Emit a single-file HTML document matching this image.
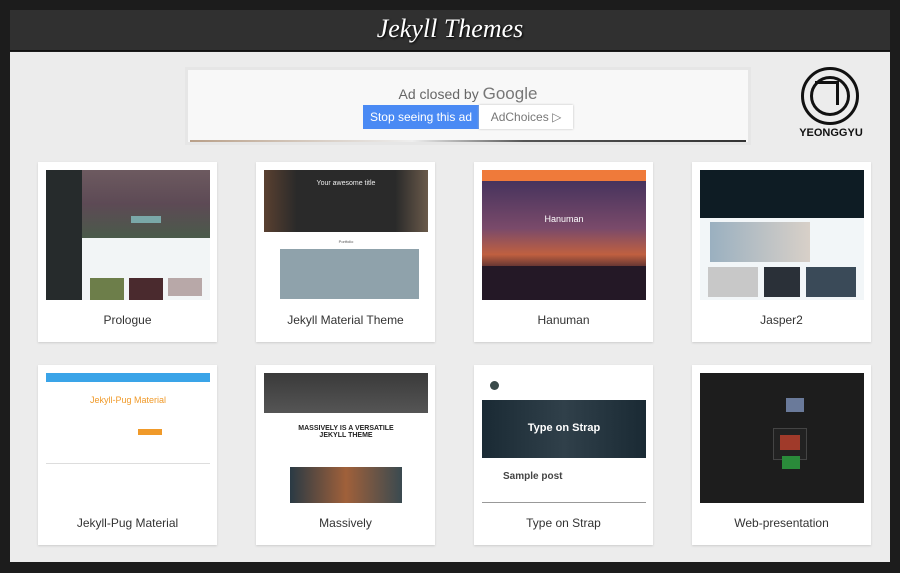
<!DOCTYPE html>
<html><head><style>
*{margin:0;padding:0;box-sizing:border-box}
body{width:900px;height:573px;background:#1c1c1c;position:relative;overflow:hidden;font-family:"Liberation Sans",sans-serif}
.hdr{position:absolute;left:10px;top:10px;width:880px;height:41px;background:#303030;border-bottom:1px solid #111;text-align:center;color:#fff;font-family:"Liberation Serif",serif;font-style:italic;font-size:26px;line-height:38px;text-shadow:1px 1px 2px #000}
.main{position:absolute;left:10px;top:52px;width:880px;height:510px;background:#ececec}
.ad{position:absolute;left:185px;top:67px;width:566px;height:78px;background:#f8f8f8;border:3px solid #e6e6e6}
.ad .t{position:absolute;top:14px;width:100%;text-align:center;color:#666;font-size:14px}
.ad .t b{font-weight:normal;font-size:17px;color:#777}
.b1{position:absolute;left:175px;top:35px;width:116px;height:24px;background:#4a8af4;color:#fff;font-size:12px;line-height:24px;text-align:center}
.b2{position:absolute;left:291px;top:35px;width:94px;height:24px;background:#fff;color:#777;font-size:12px;line-height:24px;text-align:center;box-shadow:0 0 2px #bbb}
.ad .ln{position:absolute;left:2px;right:2px;bottom:0;height:2px;background:linear-gradient(90deg,#b9a089,#eee 40%,#555 60%,#333)}
.logo{position:absolute;left:801px;top:67px;width:58px;height:58px;border:3px solid #111;border-radius:50%}
.logo i{position:absolute;left:6px;top:6px;width:40px;height:40px;border:3px solid #111;border-radius:50%}
.logo s{position:absolute;left:11px;top:11px;width:24px;height:24px;border-top:3px solid #111;border-right:3px solid #111}
.lt{position:absolute;left:795px;top:127px;width:72px;text-align:center;font-size:11px;font-weight:bold;color:#111}
.card{position:absolute;width:179px;height:180px;background:#fff;box-shadow:0 1px 2px #ccc}
.th{position:absolute;left:8px;top:8px;width:164px;height:130px;overflow:hidden}
.lb{position:absolute;left:0;width:100%;top:151px;text-align:center;font-size:12px;color:#333}
</style></head><body>
<div class="hdr">Jekyll Themes</div>
<div class="main"></div>
<div class="ad"><div class="t">Ad closed by <b>Google</b></div><div class="b1">Stop seeing this ad</div><div class="b2">AdChoices ▷</div><div class="ln"></div></div>
<div class="logo"><i></i><s></s></div><div class="lt">YEONGGYU</div>

<div class="card" style="left:38px;top:162px"><div class="th" style="background:#f2f5f6">
<div style="position:absolute;left:0;top:0;width:36px;height:130px;background:#262b2c"></div>
<div style="position:absolute;left:36px;top:0;width:128px;height:68px;background:linear-gradient(180deg,#6d5a60,#5d4a55 50%,#4a5a4a)"></div>
<div style="position:absolute;left:85px;top:46px;width:30px;height:7px;background:#7aa8a8"></div>
<div style="position:absolute;left:44px;top:108px;width:34px;height:22px;background:#6d7e4a"></div>
<div style="position:absolute;left:83px;top:108px;width:34px;height:22px;background:#4a2a2e"></div>
<div style="position:absolute;left:122px;top:108px;width:34px;height:18px;background:#b8a8a8"></div>
</div><div class="lb">Prologue</div></div>

<div class="card" style="left:256px;top:162px"><div class="th" style="background:#fff">
<div style="position:absolute;left:0;top:0;width:164px;height:62px;background:linear-gradient(90deg,#5a4030,#2a2a2a 20%,#2a2a2a 80%,#6a5a4a)"></div>
<div style="position:absolute;top:10px;width:100%;text-align:center;color:#eee;font-size:7px">Your awesome title</div>
<div style="position:absolute;left:16px;top:79px;width:139px;height:50px;background:#8fa2ab"></div>
<div style="position:absolute;top:69px;width:100%;text-align:center;color:#555;font-size:4px">Portfolio</div>
</div><div class="lb">Jekyll Material Theme</div></div>

<div class="card" style="left:474px;top:162px"><div class="th" style="background:linear-gradient(180deg,#3a2e5a,#7a4a6a 45%,#c06040 65%,#2a1a2a 80%)">
<div style="position:absolute;left:0;top:0;width:164px;height:11px;background:#ef7a3a"></div>
<div style="position:absolute;top:44px;width:100%;text-align:center;color:#fff;font-size:9px">Hanuman</div>
<div style="position:absolute;left:0;top:96px;width:164px;height:34px;background:#241826"></div>
</div><div class="lb">Hanuman</div></div>

<div class="card" style="left:692px;top:162px"><div class="th" style="background:#f2f6f8">
<div style="position:absolute;left:0;top:0;width:164px;height:48px;background:#0e1c24"></div>
<div style="position:absolute;left:10px;top:52px;width:100px;height:40px;background:linear-gradient(90deg,#9ab0c0,#d8d0c8)"></div>
<div style="position:absolute;left:8px;top:97px;width:50px;height:30px;background:#c8c8c8"></div>
<div style="position:absolute;left:64px;top:97px;width:36px;height:30px;background:#2a3038"></div>
<div style="position:absolute;left:106px;top:97px;width:50px;height:30px;background:#3a4a58"></div>
</div><div class="lb">Jasper2</div></div>

<div class="card" style="left:38px;top:365px"><div class="th" style="background:#fff">
<div style="position:absolute;left:0;top:0;width:164px;height:9px;background:#3aa4e8"></div>
<div style="position:absolute;top:22px;width:100%;text-align:center;color:#f09a2a;font-size:9px">Jekyll-Pug Material</div>
<div style="position:absolute;left:92px;top:56px;width:24px;height:6px;background:#f09a2a"></div>
<div style="position:absolute;left:0;top:90px;width:164px;height:1px;background:#ddd"></div>
</div><div class="lb">Jekyll-Pug Material</div></div>

<div class="card" style="left:256px;top:365px"><div class="th" style="background:#fff">
<div style="position:absolute;left:0;top:0;width:164px;height:40px;background:linear-gradient(180deg,#3a3a3a,#555)"></div>
<div style="position:absolute;left:10px;top:40px;width:144px;height:90px;background:#fff"></div>
<div style="position:absolute;top:52px;width:100%;text-align:center;color:#222;font-size:7px;font-weight:bold">MASSIVELY IS A VERSATILE<br>JEKYLL THEME</div>
<div style="position:absolute;left:26px;top:94px;width:112px;height:36px;background:linear-gradient(90deg,#2a3a44,#a0603a,#3a4a50)"></div>
</div><div class="lb">Massively</div></div>

<div class="card" style="left:474px;top:365px"><div class="th" style="background:#fff">
<div style="position:absolute;left:8px;top:8px;width:9px;height:9px;border-radius:50%;background:#3a4a4a"></div>
<div style="position:absolute;left:0;top:27px;width:164px;height:58px;background:linear-gradient(90deg,#1a2a34,#30404a,#1a2a34)"></div>
<div style="position:absolute;top:49px;width:100%;text-align:center;color:#fff;font-size:11px;font-weight:bold">Type on Strap</div>
<div style="position:absolute;left:21px;top:98px;color:#444;font-size:10px;font-weight:bold">Sample post</div>
<div style="position:absolute;left:0;top:129px;width:164px;height:1px;background:#999"></div>
</div><div class="lb">Type on Strap</div></div>

<div class="card" style="left:692px;top:365px"><div class="th" style="background:#1d1d1d">
<div style="position:absolute;left:73px;top:55px;width:34px;height:32px;background:#222;border:1px solid #444"></div>
<div style="position:absolute;left:80px;top:62px;width:20px;height:15px;background:#a03a2a"></div>
<div style="position:absolute;left:82px;top:83px;width:18px;height:13px;background:#2a8a3a"></div>
<div style="position:absolute;left:86px;top:25px;width:18px;height:14px;background:#6a7a9a"></div>
</div><div class="lb">Web-presentation</div></div>
</body></html>
